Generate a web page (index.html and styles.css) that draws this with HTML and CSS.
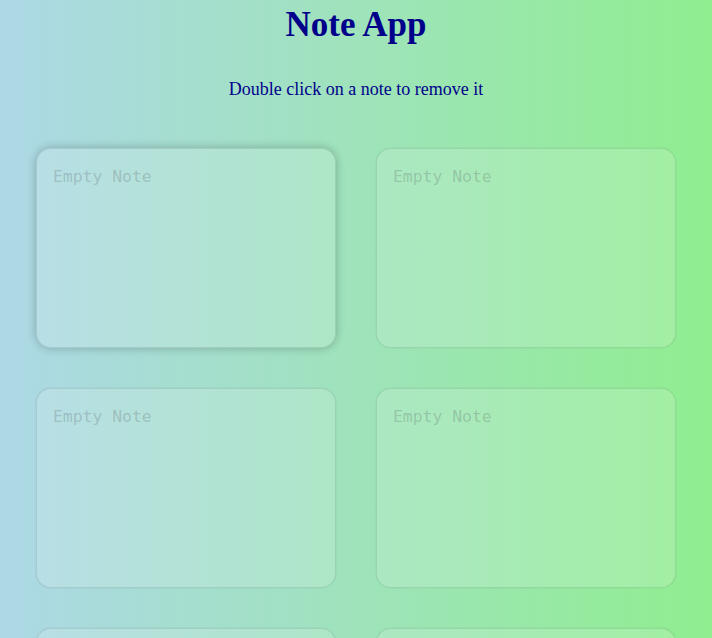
FILE: index.html
```html
<!DOCTYPE html>
<html lang="en">
<head>
<meta charset="utf-8">
<title>Note App</title>
<link rel="stylesheet" href="styles.css">
</head>
<body>
  <header class="header">
    <h1 class="title">Note App</h1>
    <p class="subtitle">Double click on a note to remove it</p>
  </header>
  <main class="notes">
    <textarea class="note" placeholder="Empty Note" autofocus></textarea>
    <textarea class="note" placeholder="Empty Note"></textarea>
    <textarea class="note" placeholder="Empty Note"></textarea>
    <textarea class="note" placeholder="Empty Note"></textarea>
    <textarea class="note" placeholder="Empty Note"></textarea>
    <textarea class="note" placeholder="Empty Note"></textarea>
  </main>
</body>
</html>
```

FILE: styles.css
```css
html, body {
  margin: 0;
  padding: 0;
}

body {
  height: 638px;
  overflow: hidden;
  background: linear-gradient(to right, #add8e6, #90ee90);
  font-family: "Liberation Serif", "Times New Roman", serif;
  color: #00008b;
}

.header {
  text-align: center;
  padding-top: 5px;
}

.title {
  margin: 0;
  font-size: 35px;
  font-weight: bold;
  line-height: 40px;
}

.subtitle {
  margin: 34px 0 0;
  font-size: 18px;
  line-height: 21px;
}

.notes {
  display: grid;
  grid-template-columns: repeat(2, 300px);
  justify-content: center;
  gap: 40px;
  margin-top: 48px;
}

.note {
  box-sizing: border-box;
  width: 300px;
  height: 200px;
  padding: 16px;
  border: 1px solid rgba(0, 0, 0, 0.09);
  border-radius: 15px;
  background: rgba(255, 255, 255, 0.15);
  box-shadow: 0 0 2px rgba(0, 0, 0, 0.1);
  font-family: "DejaVu Sans Mono", monospace;
  font-size: 16.4px;
  line-height: 23px;
  color: #00008b;
  caret-color: #00008b;
  resize: none;
  outline: none;
}

.note::placeholder {
  color: rgba(100, 110, 110, 0.3);
}

.note:focus {
  box-shadow: 0 0 10px rgba(0, 0, 0, 0.25);
}
```
